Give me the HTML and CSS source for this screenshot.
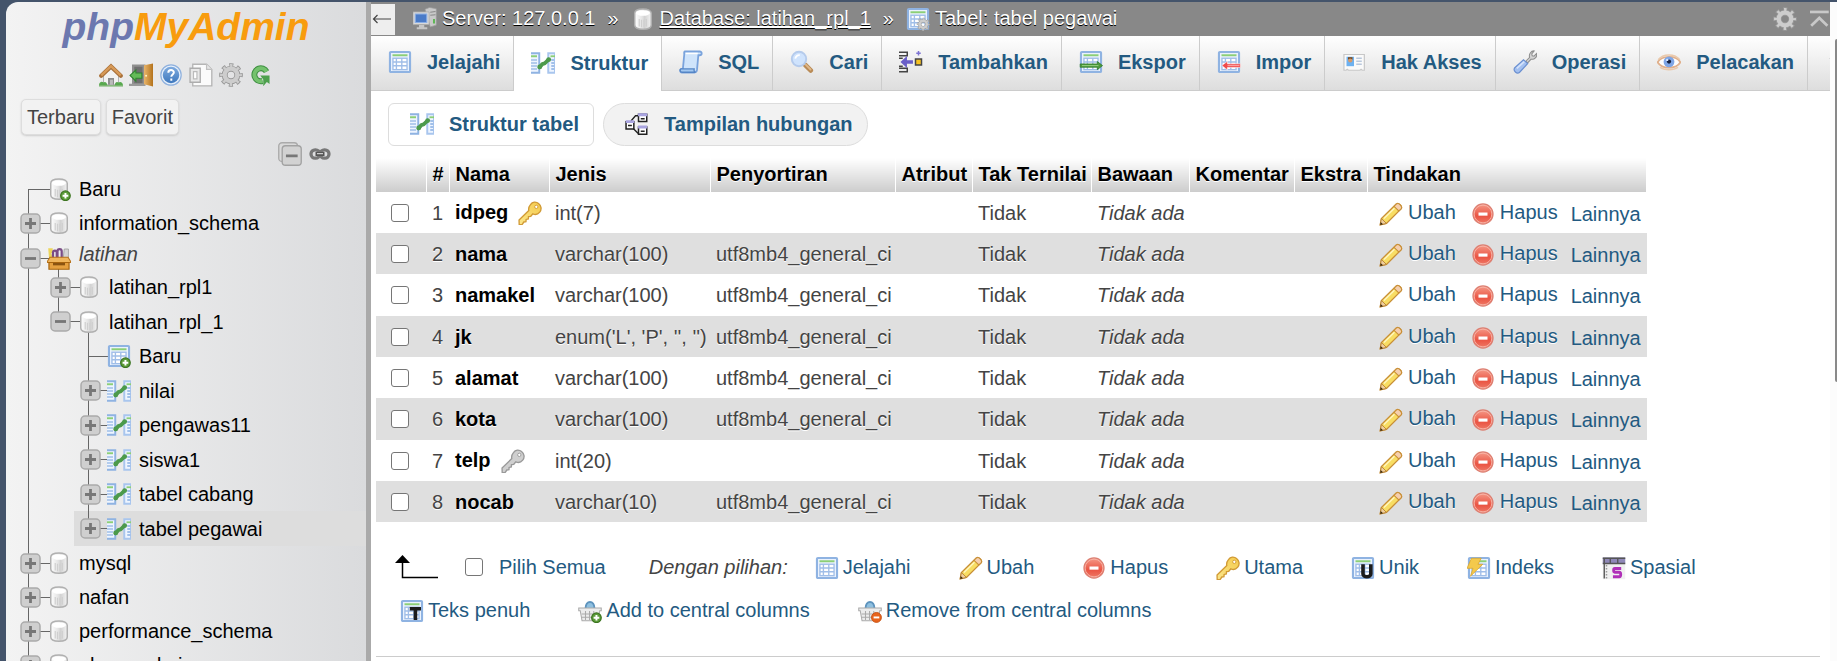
FILE: index.html
```html
<!DOCTYPE html>
<html lang="id">
<head>
<meta charset="utf-8">
<title>phpMyAdmin – tabel pegawai</title>
<link rel="stylesheet" href="styles.css">
</head>
<body>
<svg class="sprites" aria-hidden="true">
  <defs>
    <linearGradient id="g-cyl" x1="0" x2="1" y1="0" y2="0"><stop offset="0" stop-color="#fff"/><stop offset=".45" stop-color="#e4e4e4"/><stop offset=".6" stop-color="#d2d2d2"/><stop offset="1" stop-color="#f4f4f4"/></linearGradient>
    <linearGradient id="g-key" x1="0" x2="1" y1="1" y2="0"><stop offset="0" stop-color="#fbe68a"/><stop offset="1" stop-color="#f4ca4c"/></linearGradient>
    <linearGradient id="g-red" x1="0" x2="0" y1="0" y2="1"><stop offset="0" stop-color="#f59a88"/><stop offset=".6" stop-color="#ea5443"/><stop offset="1" stop-color="#ee7a68"/></linearGradient>
    <linearGradient id="g-door" x1="0" x2="1" y1="0" y2="0"><stop offset="0" stop-color="#e9b56a"/><stop offset="1" stop-color="#b4731c"/></linearGradient>
    <linearGradient id="g-help" x1="0" x2="0" y1="0" y2="1"><stop offset="0" stop-color="#7fabdf"/><stop offset="1" stop-color="#3e78bd"/></linearGradient>

    <symbol id="i-db" viewBox="0 0 16 16"><path d="M2.500 4.200V12c0 1.700 2.200 2.800 5.500 2.800s5.500-1.100 5.500-2.800V4.200C13.500 2.300 11.300 1.300 8 1.300S2.500 2.300 2.500 4.200z" fill="url(#g-cyl)" stroke="#b0b0b0"/><ellipse cx="8" cy="4" rx="4.600" ry="1.900" fill="#fff"/><path d="M5.500 8v5M7 8.500v5M8.600 8.500v5M10.200 8v5" stroke="#cfcfcf" stroke-width=".8"/></symbol>
    <symbol id="i-plus-badge" viewBox="0 0 16 16"><circle cx="12.300" cy="12.500" r="3.200" fill="#5c9c3a" stroke="#3c7420" stroke-width=".8"/><path d="M12.300 10.600v3.800M10.400 12.500h3.800" stroke="#fff" stroke-width="1.300"/></symbol>
    <symbol id="i-db-new" viewBox="0 0 16 16"><use href="#i-db"/><use href="#i-plus-badge"/></symbol>
    <symbol id="i-table" viewBox="0 0 16 16"><rect x="1.300" y="1.300" width="13.400" height="13.400" rx=".6" fill="#eaf2fd" stroke="#8fb3e2" stroke-width="1.400"/><path d="M3 3.500h10" stroke="#8ccf76" stroke-width="1.300"/><rect x="3.300" y="5.500" width="9.400" height="7.600" fill="#fff" stroke="#a0bee8" stroke-width=".9"/><path d="M5.600 5.500v7.600M9.200 5.500v7.600M3.300 8h9.400M3.300 10.500h9.400" stroke="#a0bee8" stroke-width=".9"/></symbol>
    <symbol id="i-table-new" viewBox="0 0 16 16"><use href="#i-table"/><use href="#i-plus-badge"/></symbol>
    <symbol id="i-struct" viewBox="0 0 16 16"><path d="M0 1.500h5.500v13H0z" fill="#eef5ff"/><path d="M0 1.500h5.500v13H0M5.500 1.500v13" fill="none" stroke="#8fb3e2" stroke-width="1.300"/><path d="M0 3.500h4" stroke="#8ccf76" stroke-width="1.300"/><path d="M0 6h4M0 8h4M0 10h4M0 12h4" stroke="#a0bee8" stroke-width="1"/><path d="M16 1.500h-4.500v13H16z" fill="#eef5ff" stroke="#a9c6ee" stroke-width="1.300"/><path d="M13 3.500h3" stroke="#8ccf76" stroke-width="1.200"/><path d="M13.500 6h2M13.500 8h2M13.500 10h2M13.500 12h2" stroke="#88aee2" stroke-width="1.100"/><path d="M5.800 10.800 7.500 8.800l1.600-.6 2.600-2.400" fill="none" stroke="#4c9a4b" stroke-width="2.500" stroke-linecap="round"/><circle cx="5.800" cy="10.600" r="1.600" fill="#4c9a4b"/><circle cx="11.800" cy="5.700" r="1.600" fill="#4c9a4b"/></symbol>
    <symbol id="i-group" viewBox="0 0 16 16"><path d="M.8 1.500h3v2.800l-1 .5 2 5H1.500z" fill="#ecd55b"/><path d="M4 8V4.500c0-2 2.500-2 2.500 0V8M7 8V3.500c0-2 2.800-2 2.800 0V8" fill="none" stroke="#7b4d86" stroke-width="1.500"/><path d="M11.500 2h2.800v6h-3.500z" fill="#d5d5d5" stroke="#999" stroke-width=".5"/><path d="M2 7.500h12l1.700 2.700v.8H.3v-.8z" fill="#f0b65c" stroke="#b9741d" stroke-width=".7"/><path d="M1.300 11h13.400v4.500H1.300z" fill="#e5a03f" stroke="#a8650f" stroke-width=".8"/><path d="M4 11.300h8v1.600H4z" fill="#8a5310"/></symbol>
    <symbol id="i-home" viewBox="0 0 16 16"><path d="M3 8v6.500h10V8L8 3.500z" fill="#f2f2f2" stroke="#aaa" stroke-width=".6"/><path d="M6 14.500V10h4v4.500z" fill="#8c8c8c"/><path d="M7.300 14.500v-3.300h2v3.300z" fill="#bbb"/><path d="M1.500 8.500 8 2.300l6.500 6.200" fill="none" stroke="#a9713a" stroke-width="2.800" stroke-linecap="round"/><path d="M1.500 8.300 8 2.100l6.500 6.200" fill="none" stroke="#d79a58" stroke-width="1.600"/><path d="M0 15c0-2.500 2-3 3-2 1-1 2.500 0 2.500 2zM10.500 15c0-2 1.300-3 2.500-2 1.300-1 3 0 3 2z" fill="#58a94f"/><path d="M0 15.200h16" stroke="#6fae62" stroke-width=".8"/></symbol>
    <symbol id="i-exit" viewBox="0 0 16 16"><path d="M2 1h9v13H2z" fill="#8f8f8f"/><path d="M3.500 2.500H9v11H3.500z" fill="#6f6f6f"/><path d="M0 14.500h11" stroke="#9a9a9a" stroke-width="1.500"/><path d="M10 1.500 16 .3v15.400l-6-1.500z" fill="url(#g-door)"/><circle cx="11.400" cy="8.500" r=".7" fill="#fff2c0"/><path d="M.7 8.300 4.600 4.700v2h4v3.400h-4v2z" fill="#63bb58" stroke="#2f8430" stroke-width=".7"/></symbol>
    <symbol id="i-help" viewBox="0 0 16 16"><circle cx="8" cy="8" r="6.800" fill="#e6effa" stroke="#8fb1de" stroke-width=".8"/><circle cx="8" cy="8" r="5.500" fill="url(#g-help)"/><path d="M6.200 6.500c0-2.400 3.700-2.300 3.700-.2 0 1.300-1.700 1.400-1.700 2.900M8.200 10.300v1.500" fill="none" stroke="#fff" stroke-width="1.300"/></symbol>
    <symbol id="i-docs" viewBox="0 0 16 16"><path d="M2.500.8h9.200l3.500 3.500v10.900H2.500z" fill="#fbfbfb" stroke="#b5b5b5" stroke-width=".9"/><path d="M11.700.8v3.500h3.500" fill="#e6e6e6" stroke="#c0c0c0" stroke-width=".8"/><path d="M.7 3.500h6.800v9.300H.7z" fill="#e8e8e8" stroke="#adadad" stroke-width=".9"/><path d="M3 5.800h2.300v4.800H3z" fill="#fff" stroke="#bbb" stroke-width=".8"/></symbol>
    <symbol id="i-gear" viewBox="0 0 16 16"><circle cx="8" cy="8" r="6.400" fill="none" stroke="#999" stroke-width="3" stroke-dasharray="2.626 2.400" stroke-dashoffset="1.313"/><circle cx="8" cy="8" r="4.200" fill="none" stroke="#999" stroke-width="4"/><circle cx="8" cy="8" r="6.200" fill="none" stroke="#cdcdcd" stroke-width="2.200" stroke-dasharray="1.600 3.269" stroke-dashoffset=".8"/><circle cx="8" cy="8" r="4.200" fill="none" stroke="#cdcdcd" stroke-width="2.800"/></symbol>
    <symbol id="i-reload" viewBox="0 0 16 16"><path d="M11.700 5.800A4.300 4.300 0 1 0 9 12" fill="none" stroke="#3f8f42" stroke-width="4"/><path d="M11.700 5.800A4.300 4.300 0 1 0 9 12" fill="none" stroke="#74c26d" stroke-width="2.600"/><path d="M7.500 8.300h6.200V14l-1.800-1.300L9.500 15.500V11z" fill="#4da04d"/></symbol>
    <symbol id="i-fold" viewBox="0 0 16 16"><rect x=".5" y=".5" width="12.500" height="12.500" rx="2.200" fill="#dadada" stroke="#aaa" stroke-width=".9"/><rect x="2.800" y="2.500" width="12.700" height="13" rx="2.200" fill="#d2d2d2" stroke="#a2a2a2" stroke-width=".9"/><path d="M5.300 9.200h7.800" stroke="#777" stroke-width="1.900"/></symbol>
    <symbol id="i-link" viewBox="0 0 16 16"><rect x="2" y="5.200" width="5.800" height="5.600" rx="2.800" fill="none" stroke="#777" stroke-width="2.200"/><rect x="8.200" y="5.200" width="5.800" height="5.600" rx="2.800" fill="none" stroke="#777" stroke-width="2.200"/><path d="M5 8h6" stroke="#555" stroke-width="2.600"/><path d="M6 7.800h4" stroke="#ccc" stroke-width=".8"/></symbol>
    <symbol id="i-server" viewBox="0 0 16 16"><path d="M8 1.500 11 .3l4.500.8v11l-4 1.200z" fill="#c9c9c9" stroke="#9b9b9b" stroke-width=".5"/><path d="M11.500 3.500 15 3M11.500 5.500l3.500-.4" stroke="#888" stroke-width=".7"/><path d="M14 8v3" stroke="#54b54a" stroke-width="1.200"/><path d="M0 3.300h10.700v8.400H0z" fill="#d9d9d9" stroke="#aaa" stroke-width=".5"/><path d="M1.500 4.700h7.700v5.600H1.500z" fill="#4a7bc8" stroke="#8aaee6" stroke-width=".7"/><path d="M4 12h3.500v1.500h2v1.300H2.500v-1.300H4z" fill="#c5c5c5"/></symbol>
    <symbol id="i-table-gear" viewBox="0 0 16 16"><use href="#i-table"/><use href="#i-gear" x="7" y="7" width="9" height="9"/></symbol>
    <symbol id="i-sql" viewBox="0 0 16 16"><path d="M3.800 1h10c1.800 0 1.700 2.500 0 2.500h-.9L12 13.300c-.2 1.200-.8 1.700-1.700 1.700H2c-1.700 0-1.600-2.400 0-2.400h.6L3.500 3C3.600 2 3 1.500 3.800 1z" fill="#cfe4fb" stroke="#7aa3dc" stroke-width="1.200"/><path d="M1.500 12.600h8.600c-.2 1.100.1 2.200 1 2.200H2c-1.600 0-1.500-2.200-.5-2.200z" fill="#a3c8f1" stroke="#5585c6" stroke-width=".9"/><path d="M4.500 2.300h8" stroke="#fff" stroke-width="1"/></symbol>
    <symbol id="i-search" viewBox="0 0 16 16"><path d="m10.200 10 3.600 3.600" stroke="#b98b56" stroke-width="3.200" stroke-linecap="round"/><path d="m10.500 9.800 3.200 3.200" stroke="#e0b889" stroke-width="1.200" stroke-linecap="round"/><circle cx="6" cy="6" r="4.800" fill="#cfe3fd" stroke="#b5cbec" stroke-width="1.300"/><path d="M3.500 5.800C3.700 4.300 5 3.300 6.500 3.500" fill="none" stroke="#fff" stroke-width="1.200"/></symbol>
    <symbol id="i-insert" viewBox="0 0 16 16"><path d="M0 1.500h5.500v2.300H0M0 14.500h5.500v-2.300H0M0 5.500h2.500M0 10.800h2.500M4 14.500h1.500" fill="none" stroke="#444" stroke-width="1"/><path d="m1 8 4.300-4v2.800h4v2.400h-4V12z" fill="#6a5fc8"/><path d="M11 6h4v4h-4z" fill="#f8c322" stroke="#444"/><path d="M13 .6v3M11.500 2.100h3" stroke="#7d74d3" stroke-width="1"/></symbol>
    <symbol id="i-export" viewBox="0 0 16 16"><use href="#i-table"/><path d="M.8 9.300h11.400V7.700l3.500 2.700-3.500 2.700v-1.600H.8z" fill="#4e9a3d" stroke="#2f7a28" stroke-width=".5"/><path d="M2 10.400h11" stroke="#9fd58a" stroke-width=".6"/></symbol>
    <symbol id="i-import" viewBox="0 0 16 16"><use href="#i-table"/><path d="M15.700 9.200H7V7.500l-3.800 2.900L7 13.300v-1.700h8.700z" fill="#f04a4a" stroke="#fff" stroke-width=".4"/><path d="M7 10.400h8" stroke="#ffb3b3" stroke-width=".6"/></symbol>
    <symbol id="i-rights" viewBox="0 0 16 16"><path d="M1.300 3h13.600v10.500h-1.400l-.8-.7-.8.700H4.300l-.8-.7-.8.700H1.300z" fill="#fafafa" stroke="#c8c8c8" stroke-width=".8"/><path d="M3 4.500h5v6.300H3z" fill="#6db1f0"/><path d="M4 4.800h3v1.600H4z" fill="#7a4a1e"/><circle cx="5.500" cy="7" r="1.400" fill="#d79a68"/><path d="M9.500 5.500h3.700M9.500 7.500h3.700M9.500 9.500h3.700" stroke="#b9c8dc" stroke-width=".9"/></symbol>
    <symbol id="i-tools" viewBox="0 0 16 16"><path d="m8.500 7.500 2.600-2.600c-.7-2 .8-4.400 3-4.300l-1.600 2 .3 1.200 1.200.3 1.700-1.700c.6 2.200-1.500 4.300-3.600 3.700L9.700 8.600z" fill="#d5d5d5" stroke="#8f8f8f" stroke-width=".7"/><path d="M1 12 7 6.500 9.800 9l-5.500 6c-1.800 1.200-4.300-1-3.300-3z" fill="#a3c0f0" stroke="#6a8fd0" stroke-width=".8"/><path d="m2.500 12.300 5-4.600" stroke="#d3e2fb" stroke-width="1.200"/></symbol>
    <symbol id="i-eye" viewBox="0 0 16 16"><path d="M.4 8.200C3 3.600 12.800 3.200 15.600 8.200 13 12.800 3.500 13.200.4 8.200z" fill="#fdfdfd" stroke="#e0b08c" stroke-width="1.200"/><path d="M.8 6.500C4 2.200 12 2.200 15.200 6.500" fill="none" stroke="#eac9ab" stroke-width="1"/><path d="M2 11.500c3 2.300 9 2.300 12 0" fill="none" stroke="#eac9ab" stroke-width="1"/><circle cx="8" cy="7.900" r="3.600" fill="#7fa6e6"/><circle cx="8" cy="7.700" r="1.400" fill="#15203f"/><circle cx="6.800" cy="6.600" r=".8" fill="#d5e5ff"/></symbol>
    <symbol id="i-relation" viewBox="0 0 16 16"><path d="M4 6 7 2.500h3M5.500 11l3 3H10" fill="none" stroke="#222" stroke-width=".9"/><path d="M.7 6.500h5.200v4.800H.7zM9 1.500h5.500v4.800H9zM9 10h5.500v4.800H9z" fill="#fff" stroke="#222"/><path d="M.5 5.500h5.700v1.800H.5zM8.700.8h6.100v2H8.700zM8.700 9h6.100v2H8.700z" fill="#a9a4e0"/><path d="M2 9h2.600M10.500 4.500h2.600M10.500 12.800h2.600" stroke="#222"/></symbol>
    <symbol id="i-key" viewBox="0 0 16 16"><path d="M8.300 2.400C9.600.5 12 .2 13.700 1.700c1.900 1.500 2.200 4 .8 5.700-1.200 1.500-3 1.900-4.600 1.200L8.500 10.200l-1.500.2-.1 1.600-1.500.3-.1 1.500-1.400.2L2.800 15.600l-2 .1-.1-3L7.200 6.400C6.900 5 7.300 3.600 8.300 2.400z" fill="url(#g-key)" stroke="#d19a35" stroke-width=".9"/><circle cx="12.200" cy="3.900" r="1.100" fill="#fff" stroke="#d19a35" stroke-width=".6"/></symbol>
    <symbol id="i-key-off" viewBox="0 0 16 16"><path d="M8.300 2.400C9.600.5 12 .2 13.700 1.700c1.900 1.500 2.200 4 .8 5.700-1.200 1.500-3 1.900-4.600 1.200L8.500 10.200l-1.500.2-.1 1.600-1.500.3-.1 1.500-1.400.2L2.800 15.600l-2 .1-.1-3L7.200 6.400C6.900 5 7.300 3.600 8.300 2.400z" fill="#cfcfcf" stroke="#999" stroke-width=".9"/><circle cx="12.200" cy="3.900" r="1.100" fill="#fff" stroke="#999" stroke-width=".6"/></symbol>
    <symbol id="i-edit" viewBox="0 0 16 16"><path d="M.8 15.200 1.600 11 11.500 1.400c1.400-1.300 4.500 1.500 3.200 3.200L5 14.300z" fill="#f8dd63" stroke="#c88f37" stroke-width=".9"/><path d="m10 2.900 1.500-1.500c1.400-1.300 4.500 1.500 3.200 3.200L13.200 6z" fill="#f5cfae" stroke="#c88f37" stroke-width=".7"/><path d="M1.600 11 5 14.300l-4.200.9z" fill="#efcfa0" stroke="#b9822f" stroke-width=".6"/><path d="m1.100 13.300 1.600 1.500-1.900.5z" fill="#3b2a12"/><path d="m3.300 11 7-6.800" stroke="#fff6bd" stroke-width="1"/></symbol>
    <symbol id="i-drop" viewBox="0 0 16 16"><circle cx="8" cy="8" r="6.700" fill="url(#g-red)" stroke="#dc8073" stroke-width=".8"/><circle cx="8" cy="8" r="5.900" fill="none" stroke="#f8b5a8" stroke-width=".6"/><path d="M5 7h6v2.100H5z" fill="#fff"/></symbol>
    <symbol id="i-unique" viewBox="0 0 16 16"><use href="#i-table"/><path d="M8 5.500V12c0 2.500 5.200 2.500 5.200 0V5.500" fill="none" stroke="#1c1c1c" stroke-width="2.400"/></symbol>
    <symbol id="i-fulltext" viewBox="0 0 16 16"><use href="#i-table"/><path d="M6.500 6.500h7.500M10.300 6.500V14" fill="none" stroke="#1c1c1c" stroke-width="2.400"/></symbol>
    <symbol id="i-index" viewBox="0 0 16 16"><use href="#i-table"/><path d="M3 1.500h6.500L7.300 5.500H10.500L2.300 13.500 4 8.200H0z" fill="#f4c94c" stroke="#d9a42a" stroke-width=".5"/></symbol>
    <symbol id="i-spatial" viewBox="0 0 16 16"><path d="M.5 1h15v14.500H.5z" fill="#f0f0f0"/><path d="M.5 1h15v4H.5z" fill="#8f88b8"/><path d="M.5 1.500h15M.5 5h15M5.500 1v4M10.500 1v4M1.500 1v14" stroke="#555" stroke-width=".9"/><path d="M3 6v9" stroke="#999" stroke-dasharray="1 1"/><path d="M12.800 8.300H8.500c-1 0-1 2.500 0 2.500h3c1.300 0 1.300 3 0 3H7.300" fill="none" stroke="#b030b8" stroke-width="1.900"/></symbol>
    <symbol id="i-basket" viewBox="0 0 16 16"><path d="M5 6.500c0-6 6-6 6 0" fill="#8fc0e0" stroke="#5d93bd" stroke-width="1.300"/><path d="M.5 6h15v1.800h-1l-1.200 6.700H2.700L1.500 7.800h-1z" fill="#ececec" stroke="#aaa" stroke-width=".7"/><path d="M2.500 10h11M2.500 12.200h11M5 8v6M7.700 8v6M10.500 8v6" stroke="#aaa" stroke-width=".7"/></symbol>
    <symbol id="i-basket-add" viewBox="0 0 16 16"><use href="#i-basket"/><use href="#i-plus-badge"/></symbol>
    <symbol id="i-basket-remove" viewBox="0 0 16 16"><use href="#i-basket"/><circle cx="12.300" cy="12.300" r="3.300" fill="#e8641c" stroke="#c44f12" stroke-width=".6"/><path d="M10.400 12.300h3.800" stroke="#fff" stroke-width="1.300"/></symbol>
    <symbol id="i-top" viewBox="0 0 16 16"><path d="M0 3.300h12.500" stroke="#c8c8c8" stroke-width="1.800"/><path d="m.8 12.500 5.400-5.200 5.400 5.200" fill="none" stroke="#c8c8c8" stroke-width="1.800"/></symbol>
    <symbol id="i-expand" viewBox="0 0 21 21"><rect x="1" y="1" width="19" height="19" rx="4" fill="#cfcfcf" stroke="#aaa" stroke-width="1.500"/><path d="M10.500 5v11M5 10.500h11" stroke="#777" stroke-width="2.800"/></symbol>
    <symbol id="i-collapse" viewBox="0 0 21 21"><rect x="1" y="1" width="19" height="19" rx="4" fill="#cfcfcf" stroke="#aaa" stroke-width="1.500"/><path d="M5 10.500h11" stroke="#777" stroke-width="2.800"/></symbol>
  </defs>
</svg>

<div class="app">
  <aside class="nav">
    <a class="logo" href="#"><span class="logo-php">php</span><span class="logo-my">MyAdmin</span></a>
    <div class="nav-links">
      <a href="#" aria-label="Beranda"><svg class="ic"><use href="#i-home"/></svg></a>
      <a href="#" aria-label="Keluar"><svg class="ic"><use href="#i-exit"/></svg></a>
      <a href="#" aria-label="Dokumentasi phpMyAdmin"><svg class="ic"><use href="#i-help"/></svg></a>
      <a href="#" aria-label="Dokumentasi"><svg class="ic"><use href="#i-docs"/></svg></a>
      <a href="#" aria-label="Pengaturan panel navigasi"><svg class="ic"><use href="#i-gear"/></svg></a>
      <a href="#" aria-label="Muat ulang"><svg class="ic"><use href="#i-reload"/></svg></a>
    </div>
    <div class="quick">
      <button class="quick-btn" type="button">Terbaru</button>
      <button class="quick-btn" type="button">Favorit</button>
    </div>
    <div class="nav-tools">
      <a href="#" aria-label="Lipat semua"><svg class="ic"><use href="#i-fold"/></svg></a>
      <a href="#" aria-label="Tautkan dengan panel utama"><svg class="ic"><use href="#i-link"/></svg></a>
    </div>
    <ul class="tree">
      <li class="first"><div class="row"><span class="cell"></span><svg class="ic"><use href="#i-db-new"/></svg><a href="#">Baru</a></div></li>
      <li><div class="row"><span class="cell"><button class="toggle" type="button" aria-label="Buka"><svg><use href="#i-expand"/></svg></button></span><svg class="ic"><use href="#i-db"/></svg><a href="#">information_schema</a></div></li>
      <li>
        <div class="row group"><span class="cell"><button class="toggle" type="button" aria-label="Tutup"><svg><use href="#i-collapse"/></svg></button></span><svg class="ic"><use href="#i-group"/></svg><span class="group-name">latihan</span></div>
        <ul class="subtree">
          <li><div class="row"><span class="cell"><button class="toggle" type="button" aria-label="Buka"><svg><use href="#i-expand"/></svg></button></span><svg class="ic"><use href="#i-db"/></svg><a href="#">latihan_rpl1</a></div></li>
          <li class="last">
            <div class="row open"><span class="cell"><button class="toggle" type="button" aria-label="Tutup"><svg><use href="#i-collapse"/></svg></button></span><svg class="ic"><use href="#i-db"/></svg><a href="#">latihan_rpl_1</a></div>
            <ul class="subtree">
              <li><div class="row"><span class="cell"></span><svg class="ic"><use href="#i-table-new"/></svg><a href="#">Baru</a></div></li>
              <li><div class="row"><span class="cell"><button class="toggle" type="button" aria-label="Buka"><svg><use href="#i-expand"/></svg></button></span><svg class="ic"><use href="#i-struct"/></svg><a href="#">nilai</a></div></li>
              <li><div class="row"><span class="cell"><button class="toggle" type="button" aria-label="Buka"><svg><use href="#i-expand"/></svg></button></span><svg class="ic"><use href="#i-struct"/></svg><a href="#">pengawas11</a></div></li>
              <li><div class="row"><span class="cell"><button class="toggle" type="button" aria-label="Buka"><svg><use href="#i-expand"/></svg></button></span><svg class="ic"><use href="#i-struct"/></svg><a href="#">siswa1</a></div></li>
              <li><div class="row"><span class="cell"><button class="toggle" type="button" aria-label="Buka"><svg><use href="#i-expand"/></svg></button></span><svg class="ic"><use href="#i-struct"/></svg><a href="#">tabel cabang</a></div></li>
              <li class="last selected"><div class="row"><span class="cell"><button class="toggle" type="button" aria-label="Buka"><svg><use href="#i-expand"/></svg></button></span><svg class="ic"><use href="#i-struct"/></svg><a href="#">tabel pegawai</a></div></li>
            </ul>
          </li>
        </ul>
      </li>
      <li><div class="row"><span class="cell"><button class="toggle" type="button" aria-label="Buka"><svg><use href="#i-expand"/></svg></button></span><svg class="ic"><use href="#i-db"/></svg><a href="#">mysql</a></div></li>
      <li><div class="row"><span class="cell"><button class="toggle" type="button" aria-label="Buka"><svg><use href="#i-expand"/></svg></button></span><svg class="ic"><use href="#i-db"/></svg><a href="#">nafan</a></div></li>
      <li><div class="row"><span class="cell"><button class="toggle" type="button" aria-label="Buka"><svg><use href="#i-expand"/></svg></button></span><svg class="ic"><use href="#i-db"/></svg><a href="#">performance_schema</a></div></li>
      <li><div class="row"><span class="cell"><button class="toggle" type="button" aria-label="Buka"><svg><use href="#i-expand"/></svg></button></span><svg class="ic"><use href="#i-db"/></svg><a href="#">phpmyadmin</a></div></li>
    </ul>
  </aside>
  <div class="splitter"></div>

  <main class="main">
    <header class="crumbs">
      <button class="collapse" type="button" aria-label="Sembunyikan panel"><svg viewBox="0 0 20 10"><path d="M1.500 5H19M5.500 1 1.500 5l4 4" fill="none" stroke="#444" stroke-width="1.200"/></svg></button>
      <svg class="ic"><use href="#i-server"/></svg><a class="crumb" href="#">Server: 127.0.0.1</a>
      <span class="sep">»</span>
      <svg class="ic"><use href="#i-db"/></svg><a class="crumb hovered" href="#">Database: latihan_rpl_1</a>
      <span class="sep">»</span>
      <svg class="ic"><use href="#i-table-gear"/></svg><a class="crumb" href="#">Tabel: tabel pegawai</a>
      <span class="crumb-tools">
        <a href="#" aria-label="Pengaturan halaman"><svg class="ic"><use href="#i-gear"/></svg></a>
        <a class="to-top" href="#" aria-label="Ke atas"><svg class="ic"><use href="#i-top"/></svg></a>
      </span>
    </header>
    <nav class="tabs">
      <a class="tab" href="#"><svg class="ic"><use href="#i-table"/></svg>Jelajahi</a>
      <a class="tab active" href="#"><svg class="ic"><use href="#i-struct"/></svg>Struktur</a>
      <a class="tab" href="#"><svg class="ic"><use href="#i-sql"/></svg>SQL</a>
      <a class="tab" href="#"><svg class="ic"><use href="#i-search"/></svg>Cari</a>
      <a class="tab" href="#"><svg class="ic"><use href="#i-insert"/></svg>Tambahkan</a>
      <a class="tab" href="#"><svg class="ic"><use href="#i-export"/></svg>Ekspor</a>
      <a class="tab" href="#"><svg class="ic"><use href="#i-import"/></svg>Impor</a>
      <a class="tab" href="#"><svg class="ic"><use href="#i-rights"/></svg>Hak Akses</a>
      <a class="tab" href="#"><svg class="ic"><use href="#i-tools"/></svg>Operasi</a>
      <a class="tab" href="#"><svg class="ic"><use href="#i-eye"/></svg>Pelacakan</a>
      <a class="tab more" href="#" aria-label="Tab lainnya"><svg class="ic" viewBox="0 0 16 16"><path d="M3 5.500h8L7 10z" fill="#444"/></svg></a>
    </nav>
    <nav class="subtabs">
      <a class="subtab current" href="#"><svg class="ic"><use href="#i-struct"/></svg>Struktur tabel</a>
      <a class="subtab" href="#"><svg class="ic"><use href="#i-relation"/></svg>Tampilan hubungan</a>
    </nav>

    <table class="columns">
      <colgroup><col class="c-check"><col class="c-num"><col class="c-name"><col class="c-type"><col class="c-coll"><col class="c-attr"><col class="c-null"><col class="c-def"><col class="c-comment"><col class="c-extra"><col class="c-action"></colgroup>
      <thead><tr><th></th><th>#</th><th>Nama</th><th>Jenis</th><th>Penyortiran</th><th>Atribut</th><th>Tak Ternilai</th><th>Bawaan</th><th>Komentar</th><th>Ekstra</th><th>Tindakan</th></tr></thead>
      <tbody>
        <tr><td class="pick"><input type="checkbox" id="f1"></td><td class="num">1</td><td><label for="f1">idpeg</label><svg class="ic"><use href="#i-key"/></svg></td><td>int(7)</td><td></td><td></td><td>Tidak</td><td><i>Tidak ada</i></td><td></td><td></td><td><div class="actions"><a href="#"><svg class="ic"><use href="#i-edit"/></svg>Ubah</a><a href="#"><svg class="ic"><use href="#i-drop"/></svg>Hapus</a><a class="more-link" href="#">Lainnya</a></div></td></tr>
        <tr><td class="pick"><input type="checkbox" id="f2"></td><td class="num">2</td><td><label for="f2">nama</label></td><td>varchar(100)</td><td>utf8mb4_general_ci</td><td></td><td>Tidak</td><td><i>Tidak ada</i></td><td></td><td></td><td><div class="actions"><a href="#"><svg class="ic"><use href="#i-edit"/></svg>Ubah</a><a href="#"><svg class="ic"><use href="#i-drop"/></svg>Hapus</a><a class="more-link" href="#">Lainnya</a></div></td></tr>
        <tr><td class="pick"><input type="checkbox" id="f3"></td><td class="num">3</td><td><label for="f3">namakel</label></td><td>varchar(100)</td><td>utf8mb4_general_ci</td><td></td><td>Tidak</td><td><i>Tidak ada</i></td><td></td><td></td><td><div class="actions"><a href="#"><svg class="ic"><use href="#i-edit"/></svg>Ubah</a><a href="#"><svg class="ic"><use href="#i-drop"/></svg>Hapus</a><a class="more-link" href="#">Lainnya</a></div></td></tr>
        <tr><td class="pick"><input type="checkbox" id="f4"></td><td class="num">4</td><td><label for="f4">jk</label></td><td>enum('L', 'P', '', '')</td><td>utf8mb4_general_ci</td><td></td><td>Tidak</td><td><i>Tidak ada</i></td><td></td><td></td><td><div class="actions"><a href="#"><svg class="ic"><use href="#i-edit"/></svg>Ubah</a><a href="#"><svg class="ic"><use href="#i-drop"/></svg>Hapus</a><a class="more-link" href="#">Lainnya</a></div></td></tr>
        <tr><td class="pick"><input type="checkbox" id="f5"></td><td class="num">5</td><td><label for="f5">alamat</label></td><td>varchar(100)</td><td>utf8mb4_general_ci</td><td></td><td>Tidak</td><td><i>Tidak ada</i></td><td></td><td></td><td><div class="actions"><a href="#"><svg class="ic"><use href="#i-edit"/></svg>Ubah</a><a href="#"><svg class="ic"><use href="#i-drop"/></svg>Hapus</a><a class="more-link" href="#">Lainnya</a></div></td></tr>
        <tr><td class="pick"><input type="checkbox" id="f6"></td><td class="num">6</td><td><label for="f6">kota</label></td><td>varchar(100)</td><td>utf8mb4_general_ci</td><td></td><td>Tidak</td><td><i>Tidak ada</i></td><td></td><td></td><td><div class="actions"><a href="#"><svg class="ic"><use href="#i-edit"/></svg>Ubah</a><a href="#"><svg class="ic"><use href="#i-drop"/></svg>Hapus</a><a class="more-link" href="#">Lainnya</a></div></td></tr>
        <tr><td class="pick"><input type="checkbox" id="f7"></td><td class="num">7</td><td><label for="f7">telp</label><svg class="ic"><use href="#i-key-off"/></svg></td><td>int(20)</td><td></td><td></td><td>Tidak</td><td><i>Tidak ada</i></td><td></td><td></td><td><div class="actions"><a href="#"><svg class="ic"><use href="#i-edit"/></svg>Ubah</a><a href="#"><svg class="ic"><use href="#i-drop"/></svg>Hapus</a><a class="more-link" href="#">Lainnya</a></div></td></tr>
        <tr><td class="pick"><input type="checkbox" id="f8"></td><td class="num">8</td><td><label for="f8">nocab</label></td><td>varchar(10)</td><td>utf8mb4_general_ci</td><td></td><td>Tidak</td><td><i>Tidak ada</i></td><td></td><td></td><td><div class="actions"><a href="#"><svg class="ic"><use href="#i-edit"/></svg>Ubah</a><a href="#"><svg class="ic"><use href="#i-drop"/></svg>Hapus</a><a class="more-link" href="#">Lainnya</a></div></td></tr>
      </tbody>
    </table>

    <div class="bulk">
      <svg class="up-arrow" viewBox="0 0 43 24"><path d="M7.500 6v16.500H43" fill="none" stroke="#000" stroke-width="1.500"/><path d="M0 8 7.500 0 15 8z"/></svg>
      <input type="checkbox" id="all"><label class="all" for="all">Pilih Semua</label>
      <i class="with">Dengan pilihan:</i>
      <button type="button"><svg class="ic"><use href="#i-table"/></svg>Jelajahi</button>
      <button type="button"><svg class="ic"><use href="#i-edit"/></svg>Ubah</button>
      <button type="button"><svg class="ic"><use href="#i-drop"/></svg>Hapus</button>
      <button type="button"><svg class="ic"><use href="#i-key"/></svg>Utama</button>
      <button type="button"><svg class="ic"><use href="#i-unique"/></svg>Unik</button>
      <button type="button"><svg class="ic"><use href="#i-index"/></svg>Indeks</button>
      <button type="button"><svg class="ic"><use href="#i-spatial"/></svg>Spasial</button>
      <button type="button"><svg class="ic"><use href="#i-fulltext"/></svg>Teks penuh</button>
      <button type="button"><svg class="ic"><use href="#i-basket-add"/></svg>Add to central columns</button>
      <button type="button"><svg class="ic"><use href="#i-basket-remove"/></svg>Remove from central columns</button>
    </div>
    <hr class="rule">
  </main>
  <div class="scrollbar"><div class="thumb"></div></div>
</div>
</body>
</html>
```
FILE: styles.css
```css
* {
  box-sizing: border-box;
}

body {
  margin: 0;
  background: #44546b;
  color: #444;
  font: 20px/24px "Liberation Sans", Arial, sans-serif;
}

a {
  color: #235a81;
  text-decoration: none;
}

button {
  margin: 0;
  padding: 0;
  border: 0;
  background: none;
  color: inherit;
  font: inherit;
}

ul {
  margin: 0;
  padding: 0;
  list-style: none;
}

.sprites {
  position: absolute;
  width: 0;
  height: 0;
}

.ic {
  display: block;
  flex: none;
  width: 24px;
  height: 24px;
}

.app {
  display: grid;
  grid-template-columns: 360px 5px minmax(0, 1fr) 7px;
  height: 100vh;
  padding: 2px 0 0 6px;
  overflow: hidden;
}

/* Navigation panel */
.nav {
  min-height: 0;
  overflow: hidden;
  border-radius: 12px 0 0 0;
  background: linear-gradient(to right, #f3f3f3, #dadbdd);
}

.logo {
  display: block;
  padding-top: 2px;
  margin-bottom: 13px;
  font-size: 39px;
  font-style: italic;
  font-weight: bold;
  line-height: 46px;
  text-align: center;
}

.logo-php {
  color: #6c78af;
}

.logo-my {
  color: #f89c0e;
}

.nav-links {
  display: flex;
  justify-content: center;
  gap: 6px;
}

.quick {
  display: flex;
  gap: 5px;
  padding: 12px 15px 7px;
}

.quick-btn {
  height: 36px;
  padding: 0 5px;
  border: 1px solid #ddd;
  border-radius: 5px;
  background: #f2f2f2;
  box-shadow: 0 1px 2px #ccc;
}

.nav-tools {
  display: flex;
  justify-content: flex-end;
  gap: 6px;
  padding-right: 34px;
}

.tree {
  padding: 6px 0 0 14px;
}

.tree li {
  background: linear-gradient(#666, #666) 8px 0 / 1px 100% no-repeat;
}

.tree li.first {
  background-position: 8px 17px;
}

.tree li.last {
  background-size: 1px 17px;
}

.row {
  display: flex;
  align-items: center;
  height: 34px;
  background: linear-gradient(#666, #666) 8px 50% / 22px 1px no-repeat;
}

.row a {
  color: #000;
}

.row .ic {
  margin-right: 8px;
}

.cell {
  display: flex;
  flex: none;
  width: 27px;
}

.toggle,
.toggle svg {
  display: block;
  width: 21px;
  height: 21px;
}

.group {
  height: 30px;
  padding-top: 6px;
  background:
    linear-gradient(#666, #666) 8px 18px / 22px 1px no-repeat,
    linear-gradient(#666, #666) 38px 18px / 1px 12px no-repeat;
}

.group-name {
  padding-bottom: 9px;
  font-style: italic;
}

.open {
  background:
    linear-gradient(#666, #666) 8px 50% / 22px 1px no-repeat,
    linear-gradient(#666, #666) 38px 100% / 1px 50% no-repeat;
}

.subtree {
  padding-left: 30px;
}

.subtree > li:nth-child(even) > .row {
  height: 35px;
}

.tree li.selected {
  margin-left: -6px;
  padding-left: 6px;
  background:
    linear-gradient(#666, #666) 14px 0 / 1px 17px no-repeat,
    #ddd;
}

.splitter {
  background: #aaa;
}

/* Main panel */
.main {
  min-height: 0;
  overflow: hidden;
  background: #fff;
}

.crumbs {
  display: flex;
  align-items: center;
  height: 34px;
  background: #888;
}

.collapse {
  display: flex;
  align-items: center;
  width: 24px;
  height: 31px;
  margin-right: 18px;
  padding-left: 1px;
  background: #eee;
}

.collapse svg {
  width: 20px;
  height: 10px;
}

.crumb,
.sep {
  padding-bottom: 2px;
  color: #fff;
  text-shadow: 0 1px 0 #000;
}

.crumb {
  margin-left: 5px;
}

.hovered {
  text-decoration: underline;
}

.sep {
  margin: 0 12px;
}

.crumb-tools {
  display: flex;
  gap: 13px;
  margin-left: auto;
}

.to-top {
  width: 20px;
}

.tabs {
  display: flex;
  height: 55px;
  overflow: hidden;
}

.tab {
  display: flex;
  flex: none;
  align-items: center;
  gap: 15px;
  padding: 0 13px 2px 17px;
  border: 0 solid #ccc;
  border-width: 0 0 1px 1px;
  background: linear-gradient(#fff, #ddd);
  font-weight: bold;
}

.tab:first-child {
  border-left: 0;
}

.tab.active {
  border-bottom: 0;
  background: #fff;
}

.tab.more {
  flex: 1;
}

.subtabs {
  display: flex;
  gap: 9px;
  padding: 12px 17px;
}

.subtab {
  display: flex;
  align-items: center;
  gap: 15px;
  height: 43px;
  padding: 0 14px 2px 21px;
  border: 1px solid #ddd;
  border-radius: 22px;
  background: #f2f2f2;
  font-weight: bold;
}

.subtab.current {
  border-radius: 6px;
  background: #fff;
}

.columns {
  width: 1271px;
  margin-left: 5px;
  border-collapse: collapse;
  table-layout: fixed;
  text-shadow: 0 1px 0 #fff;
  white-space: nowrap;
}

.c-check { width: 50px; }
.c-num { width: 23px; }
.c-name { width: 100px; }
.c-type { width: 161px; }
.c-coll { width: 185px; }
.c-attr { width: 77px; }
.c-null { width: 119px; }
.c-def { width: 98px; }
.c-comment { width: 105px; }
.c-extra { width: 73px; }

.columns th {
  height: 34px;
  padding: 0 0 2px 6px;
  border-right: 1px solid #fff;
  background: linear-gradient(#fff, #ccc);
  color: #000;
  text-align: left;
}

.columns td {
  height: 41px;
  padding: 0 0 0 6px;
}

.columns tbody tr:nth-child(3n) td {
  height: 42px;
}

.columns tbody tr:nth-child(even) {
  background: #dfdfdf;
}

.columns .num {
  padding: 0 6px 0 0;
  text-align: right;
}

.columns td > .ic {
  display: inline-block;
  margin-left: 10px;
  vertical-align: middle;
}

.columns label {
  color: #000;
  font-weight: bold;
}

.columns .pick {
  padding-left: 15px;
}

input[type="checkbox"] {
  display: block;
  width: 18px;
  height: 18px;
  margin: 0;
  appearance: none;
  border: 1px solid #767676;
  border-radius: 3px;
  background: #fff;
}

.actions {
  display: flex;
  align-items: center;
  padding-left: 6px;
}

.actions a {
  display: flex;
  gap: 5px;
  margin-right: 15px;
}

.actions a + a {
  margin-right: 13px;
}

.actions .ic {
  margin-top: 2px;
}

.actions .more-link {
  padding-top: 2px;
  text-shadow: none;
}

.bulk {
  display: flex;
  flex-wrap: wrap;
  align-items: center;
  padding: 23px 5px 0;
  color: #235a81;
}

.bulk button {
  display: flex;
  align-items: center;
  gap: 4px;
  height: 43px;
  padding: 0 24px;
}

.bulk .ic {
  margin-top: 2px;
}

.up-arrow {
  width: 43px;
  height: 24px;
  margin: 0 27px 0 19px;
}

.all {
  margin: 0 43px 0 16px;
}

.with {
  margin-right: 3px;
  color: #444;
}

.rule {
  height: 1px;
  margin: 25px 10px 0 5px;
  border: 0;
  background: #ccc;
}

.scrollbar {
  padding: 37px 0 0 5px;
  background: #fcfcfc;
}

.thumb {
  height: 343px;
  border-radius: 3px 0 0 3px;
  background: #888;
}
```
